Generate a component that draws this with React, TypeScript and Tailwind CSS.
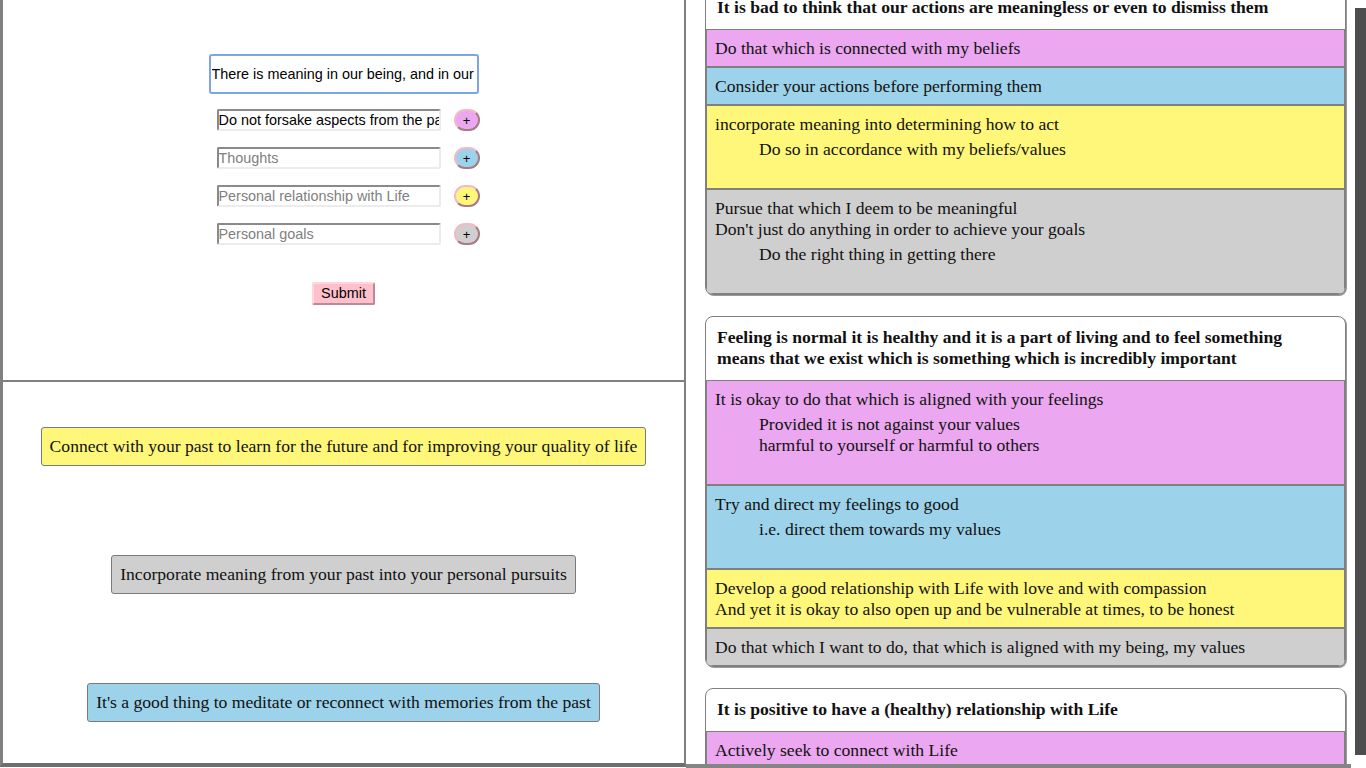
const serif = "font-['Liberation_Serif','Times_New_Roman',serif]";
const sans = "font-['Liberation_Sans',Arial,sans-serif]";

type Row = { tone: string; lines: string[]; sub?: string[] };
type Card = { title: string; rows: Row[] };

const tones: Record<string, string> = {
    pink: 'bg-[#eba7ef]',
    blue: 'bg-[#9dd3ea]',
    yellow: 'bg-[#fff77a]',
    gray: 'bg-[#cfcfcf]',
};

const cards: Card[] = [
    {
        title: 'It is bad to think that our actions are meaningless or even to dismiss them',
        rows: [
            { tone: 'pink', lines: ['Do that which is connected with my beliefs'] },
            { tone: 'blue', lines: ['Consider your actions before performing them'] },
            { tone: 'yellow', lines: ['incorporate meaning into determining how to act'], sub: ['Do so in accordance with my beliefs/values'] },
            {
                tone: 'gray',
                lines: ['Pursue that which I deem to be meaningful', "Don't just do anything in order to achieve your goals"],
                sub: ['Do the right thing in getting there'],
            },
        ],
    },
    {
        title: 'Feeling is normal it is healthy and it is a part of living and to feel something means that we exist which is something which is incredibly important',
        rows: [
            {
                tone: 'pink',
                lines: ['It is okay to do that which is aligned with your feelings'],
                sub: ['Provided it is not against your values', 'harmful to yourself or harmful to others'],
            },
            { tone: 'blue', lines: ['Try and direct my feelings to good'], sub: ['i.e. direct them towards my values'] },
            {
                tone: 'yellow',
                lines: [
                    'Develop a good relationship with Life with love and with compassion',
                    'And yet it is okay to also open up and be vulnerable at times, to be honest',
                ],
            },
            { tone: 'gray', lines: ['Do that which I want to do, that which is aligned with my being, my values'] },
        ],
    },
    {
        title: 'It is positive to have a (healthy) relationship with Life',
        rows: [
            { tone: 'pink', lines: ['Actively seek to connect with Life'] },
            { tone: 'blue', lines: ['Appreciate the things that Life gives'] },
        ],
    },
];

const fields = [
    { value: 'Do not forsake aspects from the past', placeholder: 'Past', tone: 'bg-[#eba7ef]' },
    { value: '', placeholder: 'Thoughts', tone: 'bg-[#9dd3ea]' },
    { value: '', placeholder: 'Personal relationship with Life', tone: 'bg-[#fff77a]' },
    { value: '', placeholder: 'Personal goals', tone: 'bg-[#cfcfcf]' },
];

const notes = [
    { text: 'Connect with your past to learn for the future and for improving your quality of life', tone: 'bg-[#fff77a]' },
    { text: 'Incorporate meaning from your past into your personal pursuits', tone: 'bg-[#cfcfcf]' },
    { text: "It's a good thing to meditate or reconnect with memories from the past", tone: 'bg-[#9dd3ea]' },
];

function MeaningCard({ card }: { card: Card }) {
    return (
        <div className="w-[641px] overflow-hidden rounded-lg border border-[#808080] bg-white shadow-[1px_1px_0_#9a9a9a]">
            <div className={`px-[11px] pt-[10px] pb-[11px] text-[17.6px] leading-[21px] font-bold text-[#111] ${serif}`}>{card.title}</div>
            {card.rows.map((row, i) => (
                <div key={i} className={`border border-[#808080] px-2 pt-2 pb-[7px] text-[17.6px] leading-[21px] text-[#111] ${tones[row.tone]} ${serif}`}>
                    {row.lines.map((l) => (
                        <div key={l}>{l}</div>
                    ))}
                    {row.sub && (
                        <div className="mt-1 mb-[21px] pl-11">
                            {row.sub.map((l) => (
                                <div key={l}>{l}</div>
                            ))}
                        </div>
                    )}
                </div>
            ))}
        </div>
    );
}

export default function App() {
    return (
        <div className="flex h-[768px] w-[1366px] overflow-hidden bg-white">
            {/* left pane */}
            <div className="flex h-[767px] w-[686px] shrink-0 flex-col border-l-[3px] border-r-2 border-b-4 border-[#808080] border-b-[#6e6e6e]">
                <div className="flex h-[382px] shrink-0 flex-col items-center border-b-2 border-[#808080] pt-[54px]">
                    <input
                        defaultValue="There is meaning in our being, and in our actions"
                        className={`h-[40px] w-[270px] rounded-[3px] border-2 border-[#7ea4e8] px-px text-[14.4px] text-black outline-none ${sans}`}
                    />
                    <div className="mt-[15px] flex flex-col gap-4 pl-[9px]">
                        {fields.map((f) => (
                            <div key={f.placeholder} className="flex h-[22px] items-center gap-[13px]">
                                <input
                                    defaultValue={f.value}
                                    placeholder={f.placeholder}
                                    className={`h-[22px] w-[224px] rounded-[2px] border-2 border-t-[#8a8a8a] border-l-[#8a8a8a] border-r-[#ececec] border-b-[#ececec] px-0 text-[14.4px] text-black outline-none placeholder:text-[#808080] ${sans}`}
                                />
                                <button
                                    className={`flex h-[22px] w-[26px] items-center justify-center rounded-full border-2 border-t-[#f5b9c6] border-l-[#f5b9c6] border-r-[#a87a84] border-b-[#a87a84] text-[13px] leading-none text-black ${f.tone} ${sans}`}
                                >
                                    +
                                </button>
                            </div>
                        ))}
                    </div>
                    <button
                        className={`mt-[37px] h-[23px] rounded-[2px] border-2 border-t-[#ffd6dd] border-l-[#ffd6dd] border-r-[#b88c94] border-b-[#b88c94] bg-[#ffc0cb] px-[7px] text-[14.4px] leading-none text-black ${sans}`}
                    >
                        Submit
                    </button>
                </div>
                <div className="flex flex-1 flex-col items-center gap-[89px] pt-[45px]">
                    {notes.map((n) => (
                        <div
                            key={n.text}
                            className={`rounded-[3px] border border-[#7a7a7a] px-2 py-2 text-[17.6px] leading-[21px] text-[#111] ${n.tone} ${serif}`}
                        >
                            {n.text}
                        </div>
                    ))}
                </div>
            </div>

            {/* right pane */}
            <div className="relative flex-1 overflow-hidden">
                <div className="mt-[-14px] flex flex-col gap-[21px] pl-[19px]">
                    {cards.map((c) => (
                        <MeaningCard key={c.title} card={c} />
                    ))}
                </div>
                <div className="absolute top-[8px] right-0 h-[747px] w-[11px] bg-[#4d4d4d]" />
                <div className="absolute bottom-0 left-0 h-[4px] w-[665px] bg-[#858585]" />
            </div>
        </div>
    );
}
